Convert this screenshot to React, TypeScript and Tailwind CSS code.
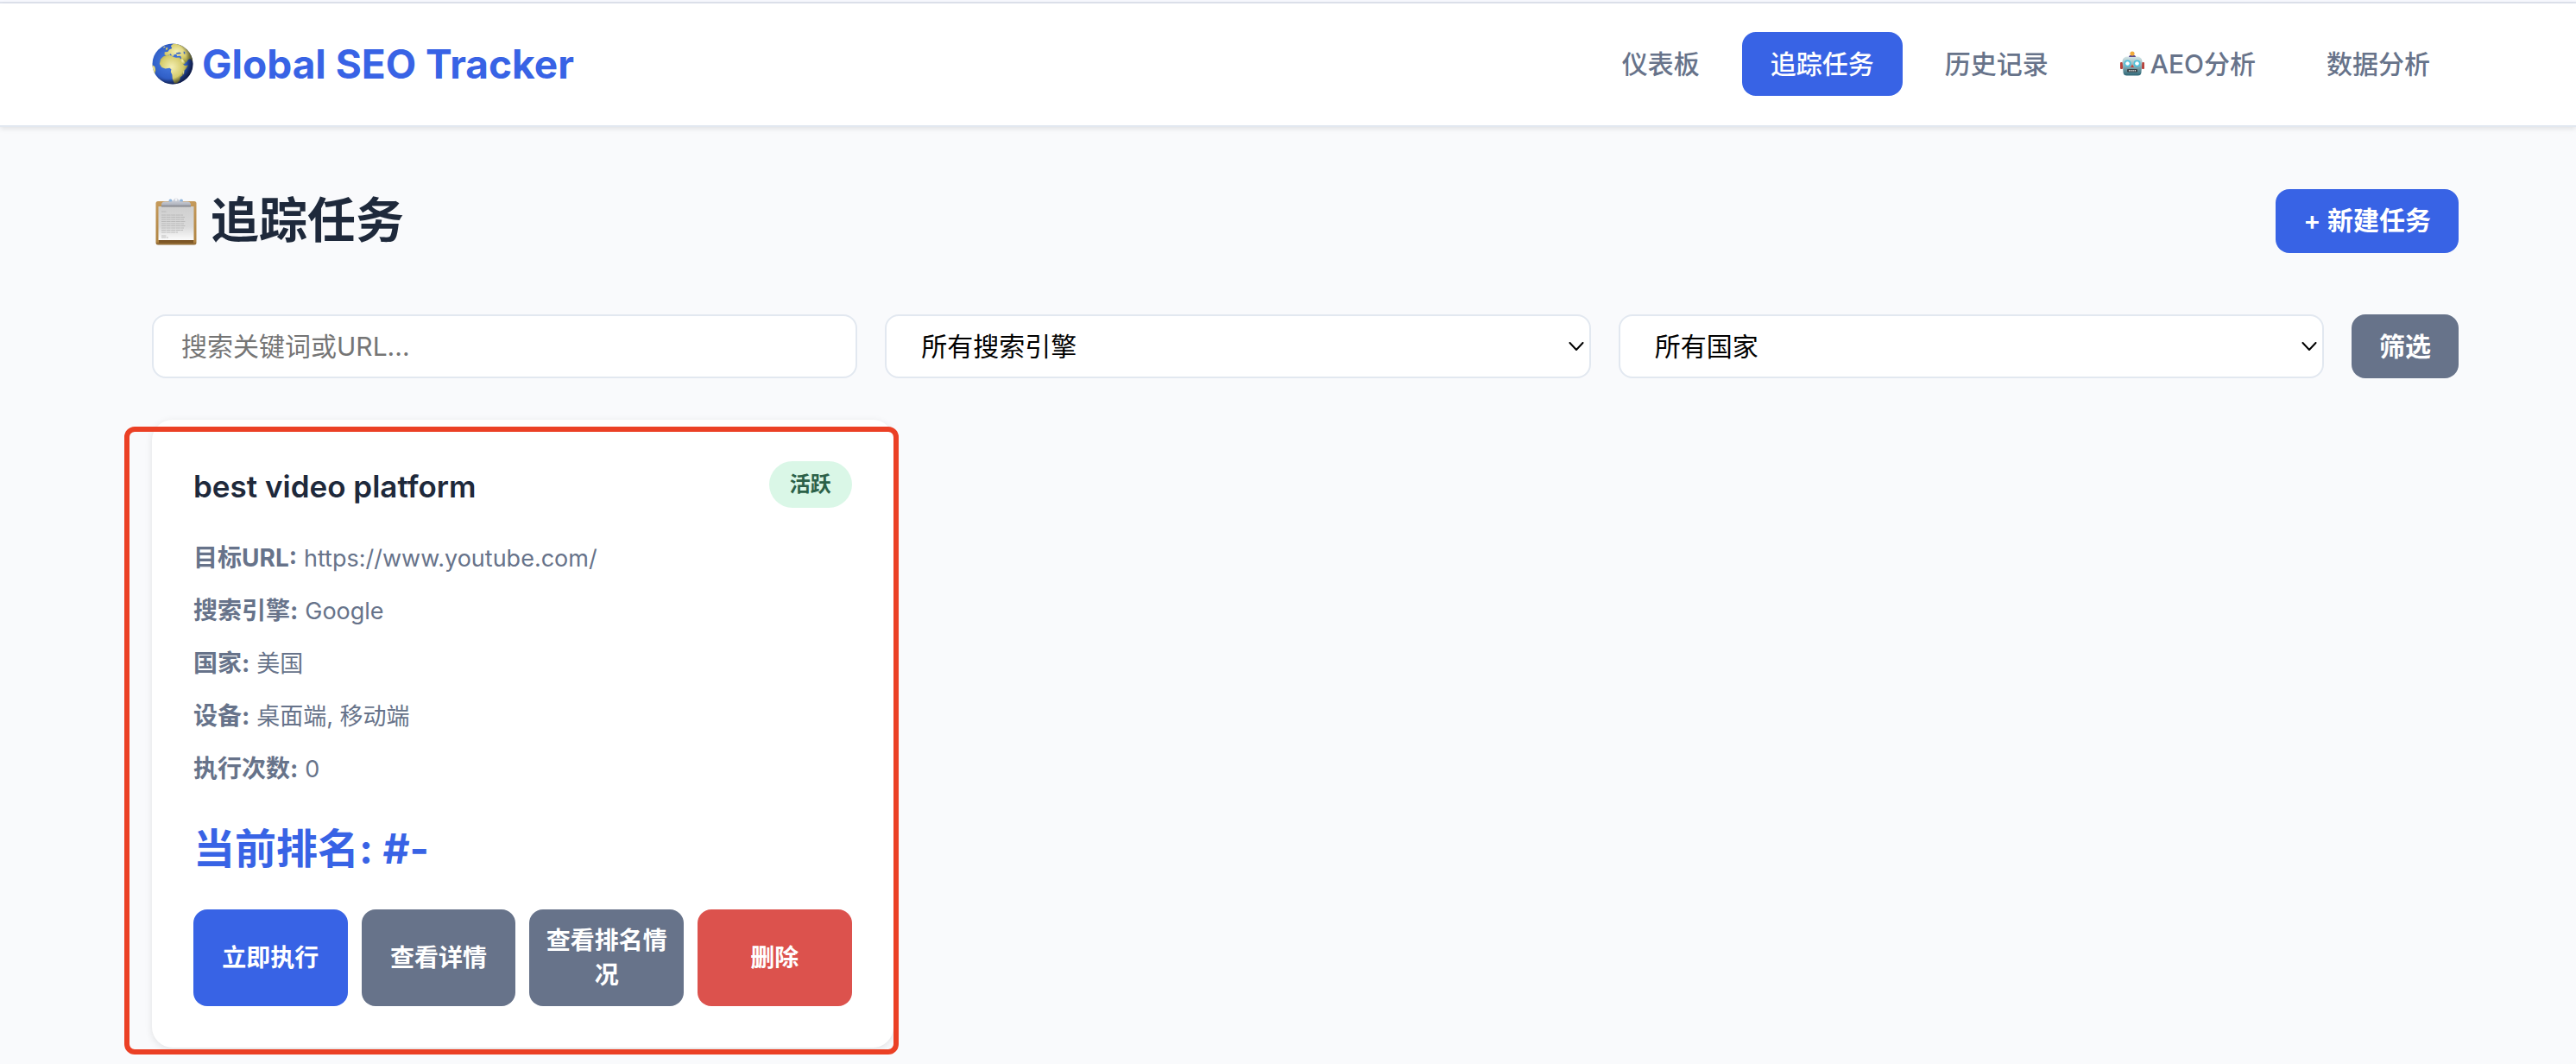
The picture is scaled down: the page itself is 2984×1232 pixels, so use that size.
import React, { useState } from 'react';

interface Task {
  keyword: string;
  url: string;
  engine: string;
  country: string;
  devices: string[];
  runs: number;
  rank: number | null;
}

const tasks: Task[] = [
  {
    keyword: 'best video platform',
    url: 'https://www.youtube.com/',
    engine: 'Google',
    country: '美国',
    devices: ['桌面端', '移动端'],
    runs: 0,
    rank: null
  }
];

const GlobeIcon = () => (
  <svg className="w-12 h-12 shrink-0" viewBox="0 0 48 48" aria-hidden="true">
    <defs>
      <radialGradient id="sea" cx="0.42" cy="0.45" r="0.6">
        <stop offset="0" stopColor="#4a7fe6" />
        <stop offset="0.65" stopColor="#3160c8" />
        <stop offset="1" stopColor="#1a2f78" />
      </radialGradient>
      <radialGradient id="land" cx="0.42" cy="0.42" r="0.65">
        <stop offset="0" stopColor="#f4efb4" />
        <stop offset="0.6" stopColor="#d6cc6c" />
        <stop offset="1" stopColor="#8b8c3a" />
      </radialGradient>
      <radialGradient id="shade" cx="0.38" cy="0.42" r="0.64">
        <stop offset="0.7" stopColor="#000" stopOpacity="0" />
        <stop offset="1" stopColor="#0b1230" stopOpacity="0.75" />
      </radialGradient>
      <clipPath id="ball">
        <circle cx="24" cy="24" r="23.5" />
      </clipPath>
    </defs>
    <g clipPath="url(#ball)">
      <rect width="48" height="48" fill="url(#sea)" />
      <g fill="url(#land)">
        <path d="M10 18.500l3-3 4-1.500 6 .2 1 1.600 4 1 4-.4 2 3 2.400 5 1.600 1.600 4-.6-2 3.600-4 4.600-.6 4-2.600 2-.6 3.600-3.400 3.400-3-.4-2-5-.4-4.600-1.600-3.400.6-3-2-1.400-5 .8-4-1.600-2.600-4z" />
        <path d="M14.5 13.5l.2-3.2 3.6-.4 2-2.6 3-1.4-1.4-3 3-2.4 6-.2 10 5.2 5.4 8 1.2 8-3.4-3.4-2 1-2.4 3.4-3.4-1-2.2-4.2-1-2.6-4 .4-.8-2.4-2.6.6-1.4 2.4-2.6-3.4-1.4.4 1.4 3-2.4-2.2-2.4.8z" />
        <path d="M34.5 17l4.6 6.2-3 1.6-3.4-5.8z" />
        <path d="M36 32.4l1.8-1.6-.6 4.4-1.8 2.2z" />
        <path d="M0 25l3.4 2 1 4.2-1.2 5.4-3.2-3z" />
        <path d="M16 6l2-1.4.6 2.4-2.2 1.4zM13 4.6l2-1 .6 1-2 .8z" />
      </g>
      <path d="M28 11.2l4-.8 2 1-2 1.2-3.6-.2zM36.6 9.6l1.6.4.2 3-1.6-1z" fill="#3a64c0" />
      <rect width="48" height="48" fill="url(#shade)" />
    </g>
  </svg>
);

const ClipboardIcon = () => (
  <svg className="w-14 h-14 shrink-0" viewBox="0 0 56 56" aria-hidden="true">
    <defs>
      <linearGradient id="board" x1="0" y1="0" x2="0" y2="1">
        <stop offset="0" stopColor="#c59a5b" />
        <stop offset="0.92" stopColor="#b08443" />
        <stop offset="1" stopColor="#8a6431" />
      </linearGradient>
      <linearGradient id="paper" x1="0" y1="0" x2="0" y2="1">
        <stop offset="0" stopColor="#cfcfcf" />
        <stop offset="0.6" stopColor="#dadada" />
        <stop offset="1" stopColor="#fbfbfb" />
      </linearGradient>
      <linearGradient id="clip" x1="0" y1="0" x2="0" y2="1">
        <stop offset="0" stopColor="#d9dce3" />
        <stop offset="0.7" stopColor="#b4b8c2" />
        <stop offset="1" stopColor="#7c7d83" />
      </linearGradient>
    </defs>
    <rect x="4.500" y="5" width="47" height="50.500" rx="2.500" fill="url(#board)" />
    <path d="M8 50h40v3.500H8z" fill="#7d5626" />
    <path d="M7.500 11h41v39h-41z" fill="url(#paper)" />
    <g stroke="#b3b3b3" strokeWidth="0.8">
      <path d="M11 17h6M11 21h25M11 23.500h27M11 26h26M11 28.500h28M11 31h26M11 33.500h28M11 36h26M11 38.500h25M11 41h19M11 45h6M11 47h8" strokeDasharray="5 0.6" />
    </g>
    <circle cx="21.500" cy="4.500" r="2" fill="#8fb5dc" />
    <circle cx="34" cy="4.500" r="2" fill="#8fb5dc" />
    <path d="M11 8.500Q11.500 5.500 15 5.500H22.500Q24.500 5 25 3.500A3.200 3.200 0 0 1 31 3.500Q31.500 5 33.500 5.500H41Q44.500 5.500 45 8.500V11.500H11z" fill="url(#clip)" />
    <circle cx="28" cy="3.400" r="1.300" fill="#f4f5f8" />
  </svg>
);

const RobotIcon = () => (
  <svg className="w-[30px] h-[30px] shrink-0" viewBox="0 0 30 30" aria-hidden="true">
    <defs>
      <linearGradient id="head" x1="0" y1="0" x2="0" y2="1">
        <stop offset="0" stopColor="#d5e6e8" />
        <stop offset="0.5" stopColor="#8cb0b8" />
        <stop offset="1" stopColor="#2d6676" />
      </linearGradient>
    </defs>
    <rect x="1" y="13" width="3" height="8" rx="1" fill="#b8433c" />
    <rect x="26" y="13" width="3" height="8" rx="1" fill="#b8433c" />
    <path d="M3.500 12Q4 6.500 10 6.500H20Q26 6.500 26.500 12L25.500 25Q25 28.500 21.500 28.500H8.500Q5 28.500 4.500 25z" fill="url(#head)" />
    <path d="M11 7Q11 4.500 15 4.500T19 7z" fill="#5d4a8c" />
    <circle cx="15" cy="3" r="2.600" fill="#f2ab3c" />
    <circle cx="9.500" cy="14.500" r="4" fill="#4fbfda" />
    <circle cx="20.500" cy="14.500" r="4" fill="#4fbfda" />
    <circle cx="9.500" cy="14.500" r="2.300" fill="#fff" />
    <circle cx="20.500" cy="14.500" r="2.300" fill="#fff" />
    <path d="M15 15.500l2 3.500h-4z" fill="#c4453b" />
    <rect x="9" y="21" width="12" height="3.600" rx="1" fill="#3b4348" />
    <path d="M11 22.800h8" stroke="#d8dcdc" strokeWidth="1.600" strokeDasharray="1.400 0.800" />
  </svg>
);

const navItems = [
  { label: '仪表板' },
  { label: '追踪任务', active: true },
  { label: '历史记录' },
  { label: 'AEO分析', icon: <RobotIcon /> },
  { label: '数据分析' }
];

interface FilterSelectProps {
  label: string;
  value: string;
  options: string[];
  onChange: (value: string) => void;
}

function FilterSelect({ label, value, options, onChange }: FilterSelectProps) {
  return (
    <div className="relative flex-1">
      <select
        aria-label={label}
        value={value}
        onChange={(e) => onChange(e.target.value)}
        className="w-full h-[74px] pl-10 pr-14 appearance-none rounded-2xl border-2 border-[#e2e8f0] bg-white text-[30px] text-black"
      >
        {options.map((option) => (
          <option key={option}>{option}</option>
        ))}
      </select>
      <svg
        className="absolute right-2 top-1/2 -translate-y-1/2 w-[18px] h-[10px] pointer-events-none"
        viewBox="0 0 18 10"
        fill="none"
        stroke="#000"
        strokeWidth="2"
        strokeLinecap="round"
        strokeLinejoin="round"
        aria-hidden="true"
      >
        <path d="M1.500 1l7.500 8 7.500-8" />
      </svg>
    </div>
  );
}

function InfoRow({ label, value }: { label: string; value: string | number }) {
  return (
    <p className="mb-4 text-[28px] leading-[45px] text-[#67738a]">
      <strong className="font-bold">{label}:</strong> <span className="text-[27px]">{value}</span>
    </p>
  );
}

function TaskCard({ task }: { task: Task }) {
  const button = 'flex-1 rounded-2xl px-4 py-4 text-[28px] leading-10 font-semibold text-white';

  return (
    <div className="relative rounded-3xl bg-white p-12 shadow-[0_2px_8px_rgba(0,0,0,0.1)]">
      <div className="flex items-start justify-between mb-8">
        <h3 className="text-[35px] leading-[58px] font-semibold text-[#1e293b]">{task.keyword}</h3>
        <span className="rounded-full bg-[#daf7e7] px-6 py-2 text-2xl leading-[38px] font-semibold text-[#2c6148]">活跃</span>
      </div>

      <InfoRow label="目标URL" value={task.url} />
      <InfoRow label="搜索引擎" value={task.engine} />
      <InfoRow label="国家" value={task.country} />
      <InfoRow label="设备" value={task.devices.join(', ')} />
      <InfoRow label="执行次数" value={task.runs} />

      <p className="my-8 text-5xl leading-[76px] font-bold text-[#3863e5]">当前排名: #{task.rank ?? '-'}</p>

      <div className="flex gap-4">
        <button className={`${button} bg-[#3863e5]`}>立即执行</button>
        <button className={`${button} bg-[#67738a]`}>查看详情</button>
        <button className={`${button} bg-[#67738a]`}>查看排名情况</button>
        <button className={`${button} bg-[#dc524d]`}>删除</button>
      </div>

      {/* highlight frame */}
      <div className="absolute -left-8 top-2 -right-1.5 -bottom-2 rounded-xl border-[6px] border-[#eb4025] pointer-events-none" />
    </div>
  );
}

export default function App() {
  const [search, setSearch] = useState('');
  const [engine, setEngine] = useState('所有搜索引擎');
  const [country, setCountry] = useState('所有国家');

  return (
    <div className="min-h-screen bg-[#f9fafc] font-['Inter','Noto_Sans_CJK_SC',sans-serif]">
      <div className="h-1 border-b-2 border-[#dfe3ed] bg-[#f7f8fe]" />
      <header className="border-b-2 border-[#e2e8f0] bg-white shadow-[0_2px_6px_rgba(0,0,0,0.1)]">
        <div className="flex items-center justify-between pl-[176px] pr-[136px] pt-[33px] pb-[34px]">
          <a href="#" className="flex items-center gap-2.5 text-[46px] font-bold text-[#3863e5]">
            <GlobeIcon />
            Global SEO Tracker
          </a>
          <nav className="flex gap-4">
            {navItems.map((item) => (
              <a
                key={item.label}
                href="#"
                className={`flex items-center gap-1.5 h-[74px] px-[33px] rounded-2xl text-[30px] font-medium ${
                  item.active ? 'bg-[#3863e5] text-white' : 'text-[#67738a]'
                }`}
              >
                {item.icon}
                {item.label}
              </a>
            ))}
          </nav>
        </div>
      </header>

      <main className="pl-[176px] pr-[136px] pt-16 pb-5">
        <div className="flex items-center justify-between mb-16">
          <h1 className="flex items-center gap-3 text-[56px] leading-[89px] font-bold text-[#1e293b]">
            <ClipboardIcon />
            追踪任务
          </h1>
          <button className="h-[74px] px-8 rounded-2xl bg-[#3863e5] text-[30px] font-semibold text-white">+ 新建任务</button>
        </div>

        <div className="flex gap-8 mb-12">
          <div className="flex-1">
            <input
              type="text"
              aria-label="搜索关键词或URL"
              placeholder="搜索关键词或URL..."
              value={search}
              onChange={(e) => setSearch(e.target.value)}
              className="w-full h-[74px] px-8 rounded-2xl border-2 border-[#e2e8f0] bg-white text-[30px] text-black placeholder:text-[#757575]"
            />
          </div>
          <FilterSelect
            label="搜索引擎"
            value={engine}
            options={['所有搜索引擎', 'Google', 'Bing']}
            onChange={setEngine}
          />
          <FilterSelect label="国家" value={country} options={['所有国家', '美国', '中国']} onChange={setCountry} />
          <button className="h-[74px] px-8 rounded-2xl bg-[#67738a] text-[30px] font-semibold text-white">筛选</button>
        </div>

        <div className="grid grid-cols-3 gap-12">
          {tasks.map((task) => (
            <TaskCard key={task.keyword} task={task} />
          ))}
        </div>
      </main>
    </div>
  );
}
